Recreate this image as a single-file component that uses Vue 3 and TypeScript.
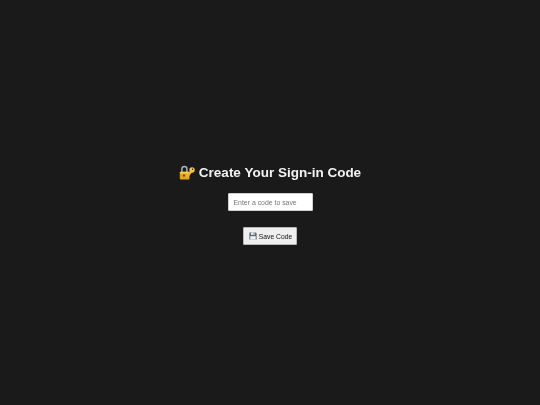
<script setup lang="ts">
const title: string = 'Create Your Sign-in Code'
</script>

<template>
  <main class="page">
    <h1 class="title">
      <svg class="lock" viewBox="0 0 16 15" aria-hidden="true">
        <path d="M2.9 7.5V4a2.5 2.5 0 0 1 5 0v3.5" fill="none" stroke="#aab4bc" stroke-width="1.5" />
        <rect x="0.8" y="6.8" width="9.6" height="7.8" rx="1" fill="#e3a41e" />
        <rect x="0.8" y="6.8" width="9.6" height="1.8" rx="0.8" fill="#f7d04f" />
        <circle cx="5" cy="10.6" r="1.1" fill="#5e4210" />
        <path d="M11.4 5.8 6.6 11l1.1 1.1.9-.7.7.6 3.6-4.6z" fill="#f2b92d" />
        <circle cx="13" cy="5" r="2.7" fill="#f5c63c" />
        <circle cx="13.6" cy="4.3" r="0.7" fill="#1a1a1a" />
      </svg>
      <span>{{ title }}</span>
    </h1>
    <input class="code" type="text" placeholder="Enter a code to save" />
    <button class="save" type="button">
      <svg class="disk" viewBox="0 0 10 10" aria-hidden="true">
        <path d="M0.5 0.5h8l1 1v8h-9z" fill="#59636b" />
        <rect x="2.4" y="0.5" width="5.2" height="3.2" fill="#e4e8ea" />
        <rect x="5.8" y="1" width="1.1" height="2.2" fill="#59636b" />
        <rect x="1.6" y="5.2" width="6.8" height="4.3" fill="#eef2f5" />
      </svg>
      <span>Save Code</span>
    </button>
  </main>
</template>

<style scoped>
.page {
  width: 540px;
  height: 405px;
  padding-top: 4px;
  box-sizing: border-box;
  background: #1a1a1a;
  display: flex;
  flex-direction: column;
  align-items: center;
  justify-content: center;
  font-family: "Liberation Sans", Arial, sans-serif;
}
.title,
.code,
.save {
  filter: blur(0.35px);
}
.title {
  margin: 0 0 12px;
  display: flex;
  align-items: center;
  gap: 4px;
  color: #f2f2f2;
  font-size: 13.5px;
  line-height: 17px;
  font-weight: 700;
}
.lock {
  width: 16px;
  height: 15px;
}
.code {
  box-sizing: border-box;
  width: 85px;
  height: 18px;
  margin: 0 0 16px;
  padding: 0 5px;
  border: 1px solid #d0d0d0;
  border-radius: 1px;
  background: #fff;
  font-family: inherit;
  font-size: 6.9px;
  outline: none;
}
.code::placeholder {
  color: #757575;
}
.save {
  box-sizing: border-box;
  width: 54px;
  height: 18px;
  padding: 0 0 0 1px;
  display: flex;
  align-items: center;
  justify-content: center;
  gap: 2px;
  border: 1px solid #b8b8b8;
  border-radius: 1px;
  background: #efefef;
  color: #111;
  font-family: inherit;
  font-size: 6.75px;
}
.disk {
  width: 8px;
  height: 8px;
}
</style>
